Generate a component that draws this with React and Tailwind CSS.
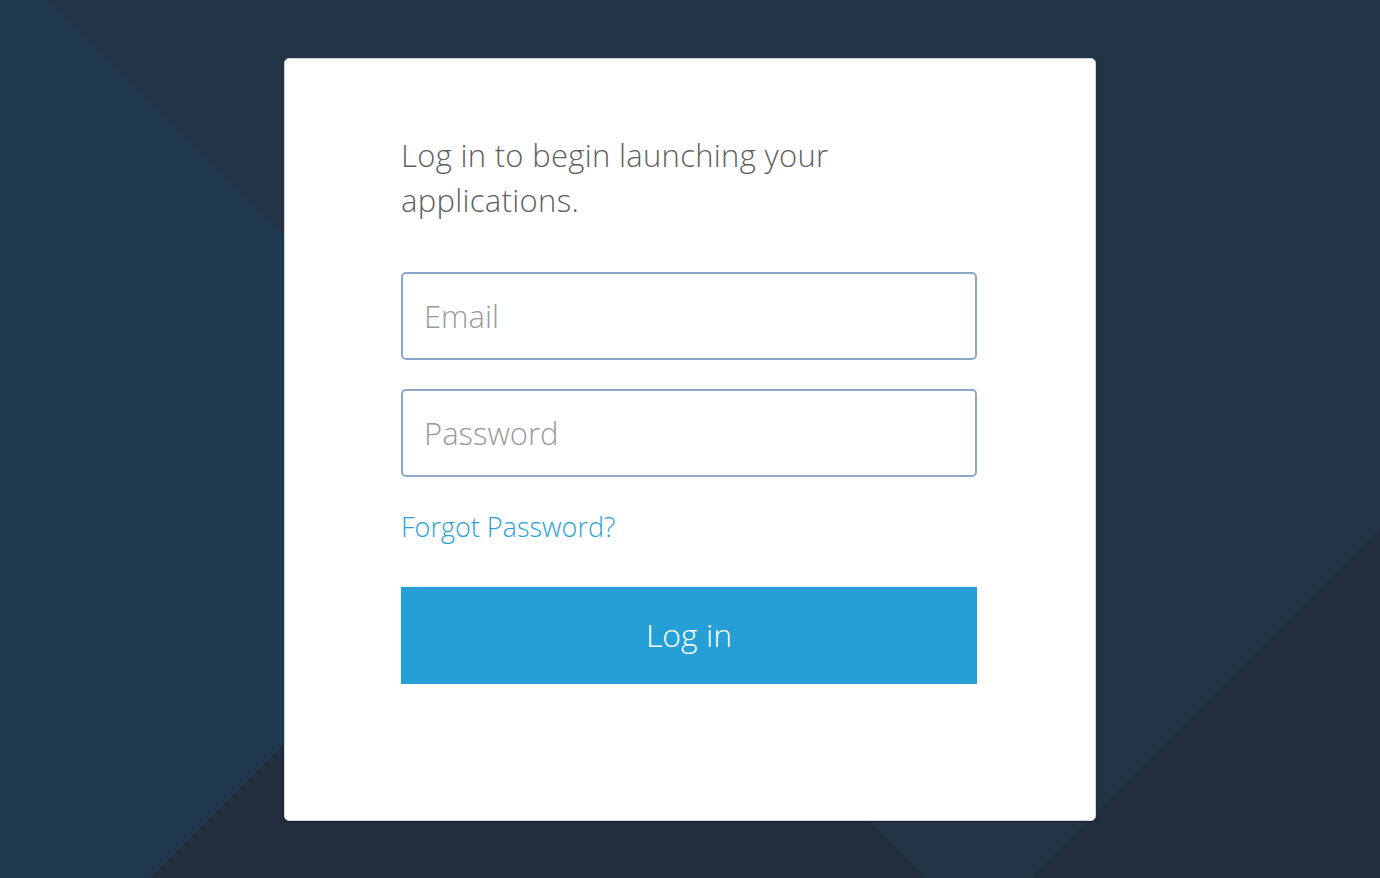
import React, { useState } from "react";

const Background = () => (
  <svg
    className="absolute inset-0 w-full h-full"
    viewBox="0 0 1380 878"
    preserveAspectRatio="none"
  >
    <rect width="1380" height="878" fill="#233446" />
    <polygon points="0,0 48,0 538,490 150,878 0,878" fill="#1f384d" />
    <polygon points="538,490 926,878 150,878" fill="#222d3d" />
    <polygon points="1380,530 1380,878 1032,878" fill="#222d3d" />
  </svg>
);

const App = () => {
  const [email, setEmail] = useState("");
  const [password, setPassword] = useState("");

  return (
    <div
      className="relative w-full h-[878px] overflow-hidden flex items-center justify-center"
      style={{ fontFamily: "'Open Sans', Lato, sans-serif" }}
    >
      <Background />

      {/* Login card */}
      <div className="relative w-[812px] h-[763px] bg-white rounded-[5px] border border-[#cfd2d6] shadow-[0_1px_2px_rgba(0,0,0,0.25)] pl-[116px] pr-[116px] pt-[74px]">
        <p className="text-[31px] leading-[45px] tracking-[0.3px] text-[#5f5f5f] font-light w-[500px]">
          Log in to begin launching your applications.
        </p>

        <input
          type="email"
          value={email}
          onChange={(e) => setEmail(e.target.value)}
          placeholder="Email"
          className="block mt-[49px] w-[576px] h-[88px] border-2 border-[#8fa8c8] rounded-[5px] px-[21px] text-[31px] text-[#555] placeholder:text-[#9a9a9a] font-light outline-none"
        />
        <input
          type="password"
          value={password}
          onChange={(e) => setPassword(e.target.value)}
          placeholder="Password"
          className="block mt-[29px] w-[576px] h-[88px] border-2 border-[#8fa8c8] rounded-[5px] px-[21px] text-[31px] text-[#555] placeholder:text-[#9a9a9a] font-light outline-none"
        />

        <a
          href="#"
          className="block mt-[31px] text-[27px] leading-[37px] text-[#2a9fd8] font-light w-fit"
        >
          Forgot Password?
        </a>

        <button className="block mt-[42px] w-[576px] h-[97px] bg-[#259fd6] text-white text-[32px] font-light">
          Log in
        </button>
      </div>
    </div>
  );
};

export default App;
